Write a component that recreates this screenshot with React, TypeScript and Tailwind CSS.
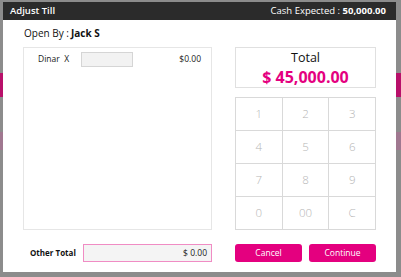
import React from 'react';

const keys = ['1', '2', '3', '4', '5', '6', '7', '8', '9', '0', '00', 'C'];

const Keypad: React.FC = () => (
  <div className="grid grid-cols-3 border-t border-l border-[#d9d9d9] h-[133px]">
    {keys.map((k) => (
      <div
        key={k}
        className="flex items-center justify-center border-r border-b border-[#d9d9d9] text-[11.5px] text-[#b5b5b5] font-light"
      >
        {k}
      </div>
    ))}
  </div>
);

export default function App() {
  return (
    <div
      className="relative w-[401px] h-[277px] bg-[#8c8c8c] overflow-hidden pt-[2px] pl-[3px]"
      style={{ fontFamily: '"Open Sans", "Liberation Sans", sans-serif' }}
    >
      {/* page behind the backdrop */}
      <div className="absolute left-0 top-[73px] w-[401px] h-[24px] bg-[#b8106a]" />
      <div className="absolute left-0 top-[132px] w-[401px] h-[18px] bg-[#a07890]" />

      <div className="relative w-[393px] h-[270px] bg-white flex flex-col">
        <div className="h-[18px] bg-[#2b2b2b] flex items-center justify-between pl-[7px] pr-[10px] text-white text-[9.5px]">
          <span className="font-semibold">Adjust Till</span>
          <span>
            Cash Expected : <span className="font-bold">50,000.00</span>
          </span>
        </div>

        <div className="px-[20px] flex flex-col flex-1">
          <div className="h-[27px] flex items-center pl-[1px] text-[10px] text-[#111]">
            Open By :<span className="font-bold ml-[2px]">Jack S</span>
          </div>

          <div className="flex gap-[23px]">
            <div className="w-[189px] flex flex-col">
              <div className="h-[183px] border border-[#e6e6e6] pt-[4px] px-[10px]">
                <div className="flex items-center text-[8.5px] text-[#222]">
                  <span className="ml-[4px] w-[43px]">Dinar&nbsp;&nbsp;X</span>
                  <div className="w-[52px] h-[15px] bg-[#f2f2f2] border border-[#d5d5d5]" />
                  <span className="ml-auto">$0.00</span>
                </div>
              </div>
              <div className="mt-[14px] h-[18px] flex items-center">
                <span className="ml-[7px] w-[53px] text-[8px] font-bold text-[#111]">Other Total</span>
                <div className="flex-1 h-[18px] border border-[#f08cc4] bg-[#f4f4f4] flex items-center justify-end pr-[4px] text-[8.5px] text-[#222]">
                  $ 0.00
                </div>
              </div>
            </div>

            <div className="w-[141px] flex flex-col">
              <div className="h-[41px] border border-[#e0e0e0] flex flex-col items-center justify-center">
                <span className="text-[12.5px] leading-[18px] text-[#111]">Total</span>
                <span className="text-[16px] leading-[20px] font-bold text-[#e4007f]">$ 45,000.00</span>
              </div>
              <div className="mt-[9px]">
                <Keypad />
              </div>
              <div className="mt-[14px] flex gap-[7px]">
                <button className="flex-1 h-[18px] rounded-[3px] bg-[#e4007f] text-white text-[8.5px]">Cancel</button>
                <button className="flex-1 h-[18px] rounded-[3px] bg-[#e4007f] text-white text-[8.5px]">Continue</button>
              </div>
            </div>
          </div>
        </div>
      </div>
    </div>
  );
}
